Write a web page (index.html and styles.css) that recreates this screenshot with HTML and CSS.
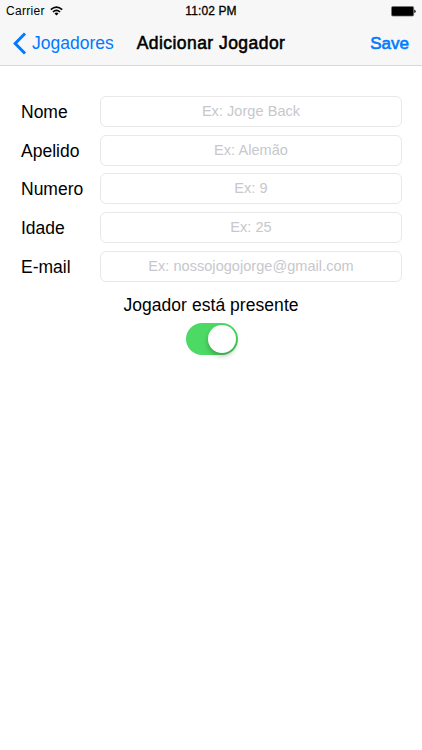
FILE: index.html
```html
<!DOCTYPE html>
<html lang="pt">
<head>
<meta charset="utf-8">
<title>Adicionar Jogador</title>
<link rel="stylesheet" href="styles.css">
</head>
<body>
<header class="top">
  <div class="status">
    <div class="carrier"><span class="carrier-name">Carrier</span>
      <svg class="wifi" width="13" height="10" viewBox="0 0 13 10"><g fill="none" stroke="#000" stroke-width="1.6"><path d="M.8 3.7Q6.5-1.5 12.2 3.7"/><path d="M2.9 6Q6.5 2.7 10.1 6"/></g><path d="M4.5 7.4Q6.5 5.8 8.5 7.4L6.5 9.5Z"/></svg>
    </div>
    <span class="time">11:02 PM</span>
    <svg class="battery" width="25" height="11" viewBox="0 0 25 11"><rect x=".5" y=".5" width="22.2" height="9.6" rx="1.4" fill="#000" stroke="#777" stroke-width=".7"/><path d="M23.3 3.7Q24.7 4.1 24.7 5.4T23.3 7.1Z"/></svg>
  </div>
  <nav class="nav">
    <a class="back"><svg width="14" height="23" viewBox="0 0 14 23"><path d="M12 1.5L2.2 11.5L12 21.5" fill="none" stroke="#007aff" stroke-width="3"/></svg><span class="back-text">Jogadores</span></a>
    <h1 class="title">Adicionar Jogador</h1>
    <a class="save">Save</a>
  </nav>
</header>
<main class="form">
  <label class="row"><span class="label">Nome</span><span class="field">Ex: Jorge Back</span></label>
  <label class="row"><span class="label">Apelido</span><span class="field">Ex: Alemão</span></label>
  <label class="row"><span class="label">Numero</span><span class="field">Ex: 9</span></label>
  <label class="row"><span class="label">Idade</span><span class="field">Ex: 25</span></label>
  <label class="row"><span class="label">E-mail</span><span class="field">Ex: nossojogojorge@gmail.com</span></label>
  <p class="present">Jogador está presente</p>
  <div class="switch"><span class="knob"></span></div>
</main>
</body>
</html>
```
FILE: styles.css
```css
* { box-sizing: border-box; }
body { margin: 0; height: 750px; overflow: hidden; background: #fff; color: #000; font-family: "Liberation Sans", Arial, sans-serif; }
.top { height: 66px; background: #f7f7f7; border-bottom: 1px solid #d8d8d8; }
.status { height: 22px; display: grid; grid-template-columns: 1fr auto 1fr; align-items: center; padding: 0 6px; font-size: 12px; }
.carrier { display: flex; align-items: center; gap: 5px; letter-spacing: .3px; }
.time { -webkit-text-stroke: .3px #000; letter-spacing: .1px; }
.battery { justify-self: end; }
.nav { height: 43px; display: grid; grid-template-columns: 1fr auto 1fr; align-items: center; padding: 0 13px; font-size: 17.5px; color: #007aff; }
.back { display: flex; align-items: center; gap: 5px; }
.title { margin: 0; font-size: 17.5px; font-weight: 400; color: #000; -webkit-text-stroke: .55px #000; letter-spacing: .45px; }
.save { justify-self: end; font-size: 17px; -webkit-text-stroke: .6px #007aff; }
.form { padding: 30px 20px 0 21px; display: flex; flex-direction: column; gap: 7.7px; }
.row { display: grid; grid-template-columns: 79px 1fr; height: 31px; align-items: center; }
.label { padding-top: 2px; font-size: 17.5px; white-space: nowrap; }
.field { height: 31px; padding-bottom: 1px; border: 1px solid #e8e8e8; border-radius: 6px; display: flex; align-items: center; justify-content: center; font-size: 14.5px; letter-spacing: .05px; color: #c7c7cd; white-space: nowrap; }
.present { margin: 5px 1px 0 0; text-align: center; font-size: 17.5px; letter-spacing: .05px; line-height: 22px; }
.switch { width: 52px; height: 32px; margin: -1px 0 0 165px; border-radius: 16px; background: #4cd964; padding: 2px; display: flex; justify-content: flex-end; }
.knob { width: 28px; height: 28px; border-radius: 50%; background: #fff; box-shadow: 0 3px 5px rgba(0,0,0,.25); }
```
